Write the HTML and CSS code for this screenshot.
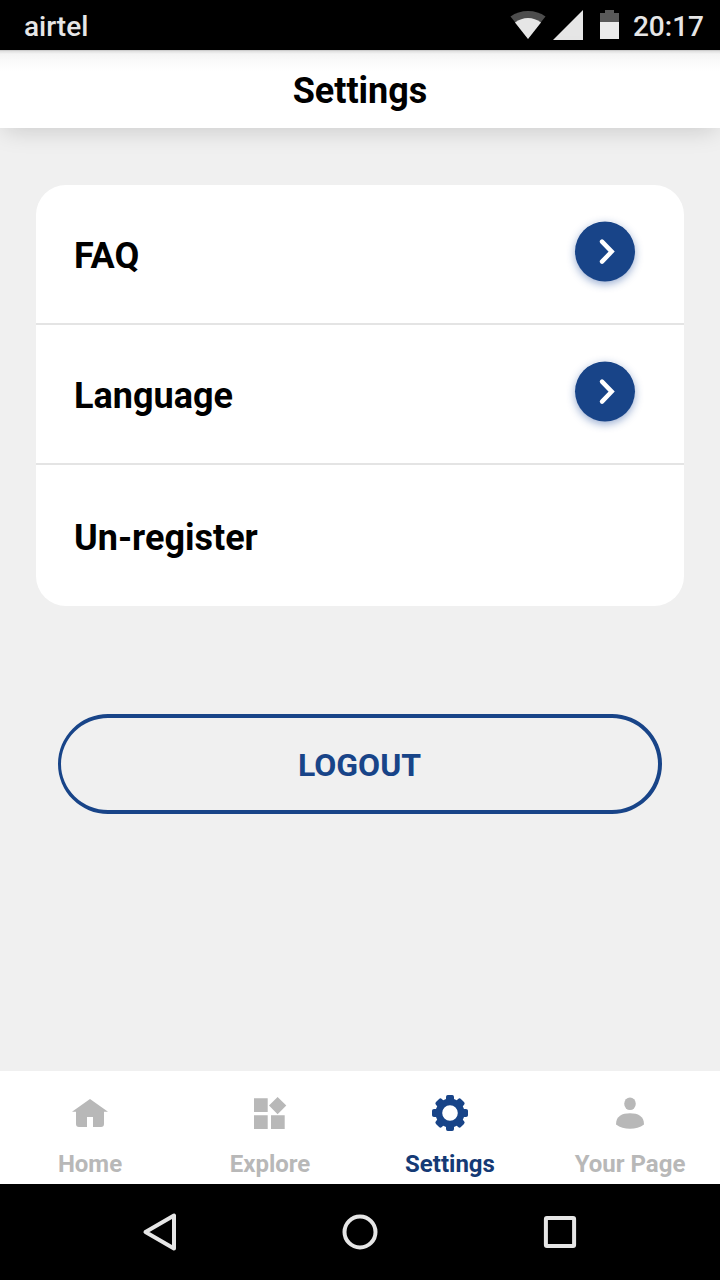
FILE: index.html
```html
<!DOCTYPE html>
<html lang="en">
  <head>
    <meta charset="UTF-8" />
    <meta name="viewport" content="width=device-width, initial-scale=1" />
    <title>Settings</title>
    <link rel="stylesheet" href="styles.css">
  </head>
  <body>
    <div class="status-bar">
      <span class="carrier">airtel</span>
      <div class="status-icons">
        <svg class="wifi" width="36" height="30" viewBox="0 0 36 30">
          <path fill="#4d4d4d" d="M18 28.5L.5 6.5Q8 1 18 1t17.500 5.500z" />
          <path fill="#e6e6e6" d="M18 29L5 12.500Q11 8 18 8t13 4.500z" />
        </svg>
        <svg class="signal" width="30" height="30" viewBox="0 0 30 30">
          <path fill="#e6e6e6" d="M30 0v30H0z" />
        </svg>
        <svg class="battery" width="19" height="29" viewBox="0 0 19 29">
          <path fill="#595959" d="M0 3h5V0h9v3h5v9H0z" />
          <path fill="#ebebeb" d="M0 12h19v17H0z" />
        </svg>
        <span class="clock">20:17</span>
      </div>
    </div>

    <header class="header">
      <h1>Settings</h1>
    </header>

    <main class="content">
      <div class="settings-list">
        <div class="settings-row">
          <span>FAQ</span>
          <button class="arrow-btn" aria-label="Open FAQ">
            <svg width="60" height="60" viewBox="0 0 60 60">
              <circle cx="30" cy="30.500" r="30" />
              <path d="M27 20.600l9.700 10-9.700 10" />
            </svg>
          </button>
        </div>
        <div class="settings-row">
          <span>Language</span>
          <button class="arrow-btn" aria-label="Open Language">
            <svg width="60" height="60" viewBox="0 0 60 60">
              <circle cx="30" cy="30.500" r="30" />
              <path d="M27 20.600l9.700 10-9.700 10" />
            </svg>
          </button>
        </div>
        <div class="settings-row">
          <span>Un-register</span>
        </div>
      </div>

      <button class="logout-btn">LOGOUT</button>
    </main>

    <nav class="tab-bar">
      <a class="tab">
        <svg width="40" height="40" viewBox="0 0 40 40">
          <path d="M20 6l18 12.800h-4V31q0 3-3 3h-8V24h-6v10H9q-3 0-3-3V18.800H2z" />
        </svg>
        <span>Home</span>
      </a>
      <a class="tab">
        <svg width="40" height="40" viewBox="0 0 40 40">
          <path d="M4 5.300h13.700v13.700H4zM4 22.300h13.700V36H4zM21 22.300h13.700V36H21zM27.600 4l8.700 8.600-8.700 8.700-8.600-8.700z" />
        </svg>
        <span>Explore</span>
      </a>
      <a class="tab active">
        <svg width="40" height="40" viewBox="0 0 40 40">
          <path fill-rule="evenodd" d="M17.800 2h4.400Q24 2 24 4v2l2.700 1.200 1.500-1.300q1.400-1.200 2.700.1l3.100 3.100q1.300 1.300.1 2.700l-1.300 1.500L34 16h2q2 0 2 1.800v4.400Q38 24 36 24h-2l-1.200 2.700 1.300 1.500q1.200 1.400-.1 2.700L30.900 34q-1.300 1.300-2.700.1l-1.500-1.300L24 34v2q0 2-1.800 2h-4.400Q16 38 16 36v-2l-2.700-1.200-1.500 1.300q-1.400 1.200-2.700-.1L6 30.900q-1.300-1.300-.1-2.700l1.300-1.500L6 24H4q-2 0-2-1.800v-4.400Q2 16 4 16h2l1.200-2.700-1.300-1.500Q4.700 10.400 6 9.100L9.100 6q1.300-1.300 2.700-.1l1.500 1.300L16 6V4q0-2 1.800-2zM20 12.200a7.800 7.800 0 1 0 0 15.600 7.800 7.800 0 1 0 0-15.600z" />
        </svg>
        <span>Settings</span>
      </a>
      <a class="tab">
        <svg width="40" height="40" viewBox="0 0 40 40">
          <ellipse cx="20" cy="10.800" rx="5.800" ry="6.300" />
          <path d="M6 31.500C6 23 12 20.300 20 20.300s14 2.700 14 11.200Q28 35.800 20 35.800T6 31.500z" />
        </svg>
        <span>Your Page</span>
      </a>
    </nav>

    <div class="nav-bar">
      <svg width="40" height="40" viewBox="0 0 40 40">
        <path d="M34 3.500v33L5.500 20z" />
      </svg>
      <svg width="40" height="40" viewBox="0 0 40 40">
        <circle cx="20" cy="20" r="15.500" />
      </svg>
      <svg width="40" height="40" viewBox="0 0 40 40">
        <rect x="5.900" y="5.900" width="28.200" height="28.200" rx="1" />
      </svg>
    </div>
  </body>
</html>
```

FILE: styles.css
```css
* {
  margin: 0;
  padding: 0;
  box-sizing: border-box;
}

body {
  font-family: Roboto, "Liberation Sans", sans-serif;
  background: #f0f0f0;
  height: 100vh;
  display: flex;
  flex-direction: column;
  overflow: hidden;
}

/* Android status bar */
.status-bar {
  height: 50px;
  background: #000;
  color: #e6e6e6;
  display: flex;
  justify-content: space-between;
  padding: 0 16px 0 24px;
  font-size: 28px;
  font-weight: 500;
  line-height: 54px;
}

.status-icons {
  display: flex;
  align-items: flex-start;
}

.status-icons svg {
  margin-top: 10px;
}

.signal {
  margin-left: 7px;
}

.battery {
  margin-left: 17px;
}

.clock {
  margin-left: 14px;
}

/* Header */
.header {
  height: 78px;
  padding-top: 2px;
  background: linear-gradient(#bcbcbc 0, #dedede 1px, #f4f4f4 4px, #fafafa 11px, #fff 22px);
  box-shadow: 0 6px 24px -4px rgba(0, 0, 0, 0.17);
  text-align: center;
}

.header h1 {
  font-size: 36px;
  font-weight: 700;
  line-height: 78px;
}

.content {
  flex: 1;
  padding: 57px 36px 0;
}

.settings-list {
  background: #fff;
  border-radius: 30px;
}

.settings-row {
  display: flex;
  justify-content: space-between;
  height: 140px;
  padding: 36px 49px 0 38px;
  border-bottom: 2px solid #e4e4e4;
  font-size: 36px;
  font-weight: 700;
  line-height: 70px;
}

.settings-row:last-child {
  height: 141px;
  padding-top: 38px;
  border-bottom: none;
}

.arrow-btn {
  width: 60px;
  height: 60px;
  border: none;
  border-radius: 50%;
  background: transparent;
  box-shadow: 0 3px 8px rgba(24, 68, 150, 0.45);
}

.arrow-btn svg {
  display: block;
  overflow: visible;
  fill: none;
  stroke: #fff;
  stroke-width: 4.4;
  stroke-linecap: round;
}

.arrow-btn circle {
  fill: #184488;
  stroke: none;
}

.logout-btn {
  display: block;
  width: 604px;
  height: 100px;
  margin: 108px auto 0;
  padding-top: 2px;
  border: 4px solid #184488;
  border-left-width: 3px;
  border-radius: 50px;
  background: transparent;
  color: #184488;
  font-family: inherit;
  font-size: 32px;
  font-weight: 700;
}

/* Bottom tabs */
.tab-bar {
  height: 113px;
  background: #fff;
  display: flex;
}

.tab {
  flex: 1;
  display: flex;
  flex-direction: column;
  align-items: center;
  padding-top: 22px;
  color: #b8b8b8;
  font-size: 24px;
  font-weight: 700;
  line-height: 28px;
}

.tab svg {
  fill: currentColor;
  margin-bottom: 17px;
}

.tab.active {
  color: #153a75;
}

.tab.active svg {
  fill: #184488;
}

/* Android navigation bar */
.nav-bar {
  height: 96px;
  padding: 0 140px;
  background: #000;
  display: flex;
  justify-content: space-between;
  align-items: center;
}

.nav-bar svg {
  fill: none;
  stroke: #e6e6e6;
  stroke-width: 4;
  stroke-linejoin: round;
}
```
